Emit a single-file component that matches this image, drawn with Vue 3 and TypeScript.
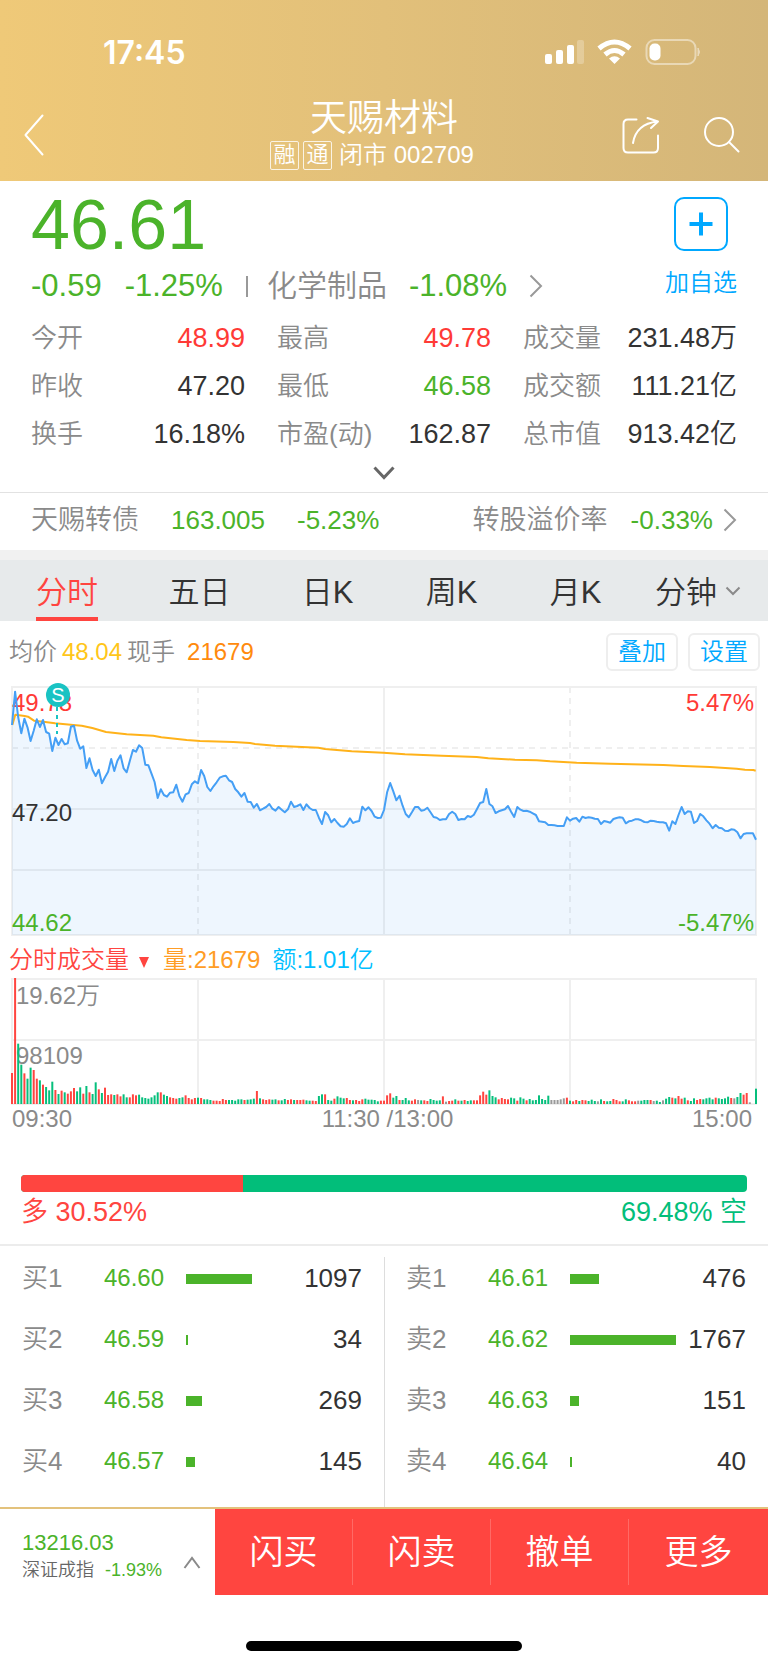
<script setup lang="ts">
import { ref } from 'vue'

type Tone = 'up' | 'down' | 'flat'

interface Stat {
  label: string
  value: string
  tone: Tone
}

const stats: Stat[] = [
  { label: '今开', value: '48.99', tone: 'up' },
  { label: '最高', value: '49.78', tone: 'up' },
  { label: '成交量', value: '231.48万', tone: 'flat' },
  { label: '昨收', value: '47.20', tone: 'flat' },
  { label: '最低', value: '46.58', tone: 'down' },
  { label: '成交额', value: '111.21亿', tone: 'flat' },
  { label: '换手', value: '16.18%', tone: 'flat' },
  { label: '市盈(动)', value: '162.87', tone: 'flat' },
  { label: '总市值', value: '913.42亿', tone: 'flat' },
]

const tabs = ['分时', '五日', '日K', '周K', '月K', '分钟']
const activeTab = ref(0)

interface Level {
  name: string
  price: string
  volume: number
}

const books: { id: string; caption: string; levels: Level[] }[] = [
  {
    id: 'bids',
    caption: '买盘',
    levels: [
      { name: '买1', price: '46.60', volume: 1097 },
      { name: '买2', price: '46.59', volume: 34 },
      { name: '买3', price: '46.58', volume: 269 },
      { name: '买4', price: '46.57', volume: 145 },
    ],
  },
  {
    id: 'asks',
    caption: '卖盘',
    levels: [
      { name: '卖1', price: '46.61', volume: 476 },
      { name: '卖2', price: '46.62', volume: 1767 },
      { name: '卖3', price: '46.63', volume: 151 },
      { name: '卖4', price: '46.64', volume: 40 },
    ],
  },
]
const maxLevel = Math.max(...books.flatMap((b) => b.levels.map((l) => l.volume)))
const levelWidth = (v: number) => `${(v / maxLevel) * 100}%`

const longShare = 30.52
const actions = ['闪买', '闪卖', '撤单', '更多']

// One sample per trading minute, 240 intervals across the plot.
const LEFT = 12
const STEP = 744 / 240
const minuteX = (i: number) => LEFT + i * STEP

// Depth of each sample below the chart origin, three units to a pixel.
const price = [
  165, 65, 142, 190, 146, 172, 213, 182, 148, 171, 150, 186, 191, 243, 203, 225, 207, 223, 220, 170,
  167, 212, 236, 229, 294, 265, 300, 318, 299, 340, 322, 305, 267, 303, 272, 256, 295, 307, 273, 240,
  245, 226, 234, 284, 286, 311, 336, 384, 358, 375, 380, 368, 367, 344, 378, 395, 373, 369, 343, 334,
  340, 300, 318, 351, 363, 349, 337, 323, 319, 317, 331, 336, 357, 367, 380, 369, 395, 396, 413, 402,
  421, 416, 411, 402, 416, 422, 411, 419, 427, 418, 395, 411, 408, 403, 420, 403, 414, 420, 420, 443,
  462, 426, 436, 457, 447, 459, 469, 470, 462, 445, 459, 455, 453, 410, 421, 412, 423, 440, 444, 443,
  420, 367, 339, 364, 391, 377, 407, 432, 442, 427, 411, 411, 422, 420, 413, 427, 441, 443, 450, 448,
  448, 432, 425, 432, 450, 447, 448, 438, 441, 434, 417, 399, 396, 357, 402, 409, 429, 424, 421, 418,
  408, 425, 441, 411, 419, 423, 422, 425, 430, 435, 454, 455, 457, 465, 465, 466, 468, 468, 468, 442,
  452, 446, 444, 455, 440, 444, 442, 443, 446, 447, 462, 453, 455, 458, 447, 444, 442, 443, 460, 454,
  452, 448, 448, 451, 456, 457, 452, 453, 455, 457, 457, 460, 482, 454, 462, 435, 411, 432, 424, 425,
  459, 453, 432, 439, 451, 461, 475, 465, 473, 475, 482, 483, 478, 479, 487, 505, 492, 490, 490, 490,
  509,
]
const toY = (v: number) => v / 3 - 10
const pricePoints = price.map((v, i) => `${minuteX(i).toFixed(1)},${toY(v).toFixed(1)}`).join(' ')
const areaPoints = `12,255 ${pricePoints} 756,255`

const average: [number, number][] = [
  [37, 165], [46, 134], [74, 138], [84, 140], [102, 152], [130, 155], [165, 160], [220, 165], [245, 167],
  [277, 174], [318, 186], [380, 193], [460, 197], [484, 202], [560, 210], [600, 213], [700, 216],
  [750, 219], [765, 222], [825, 227], [955, 233], [975, 237], [1055, 244], [1150, 248], [1215, 253],
  [1325, 257], [1430, 261], [1465, 265], [1545, 269], [1610, 271], [1650, 274], [1730, 278],
  [1830, 281], [1990, 285], [2050, 288], [2130, 291], [2210, 296], [2235, 299], [2260, 300], [2267, 302],
]
const averagePoints = average.map(([x, y]) => `${(x / 3).toFixed(1)},${toY(y).toFixed(1)}`).join(' ')

// Minute volumes: height in thirds of a pixel plus direction (r up, g down, n unchanged).
const volumeData =
  '93r 378r 181g 118g 92r 76g 109g 102r 76r 71g 58r 51g 41g 67g 42r 30g 40r 35g 31r 38r ' +
  '48r 38g 50g 31r 54g 35r 30g 65g 44r 33g 49r 27r 29r 27g 29r 23r 29g 20g 20r 29r ' +
  '26r 28g 20g 18g 16g 20g 26g 35g 35r 28g 24g 20r 18r 16r 18g 20g 26r 18r 14r 18r ' +
  '19g 18r 14g 14g 12g 10r 10r 9r 15r 12r 12g 12g 10g 14g 14g 12r 13g 14g 16g 39r ' +
  '17g 14r 12r 14r 13g 14g 11r 11g 15g 12r 14r 12g 12r 12r 13r 11g 10g 10r 9r 24g ' +
  '29g 29r 12g 10g 16r 23g 19g 17g 18r 12r 11g 12r 9r 14r 16g 13g 13g 12g 8g 10r ' +
  '10r 26r 32r 19g 24g 12r 12g 18g 11g 10r 14r 12n 11g 11r 9r 15g 12g 10g 11g 23r ' +
  '7n 9r 10r 14g 10r 10g 12r 9g 11g 11r 11r 26r 37r 28r 41g 24g 20g 14r 18r 15r ' +
  '14r 19g 17g 10r 20g 16g 11r 15g 11g 12g 26g 15g 12g 25g 12n 12n 12n 14n 17n 19r ' +
  '10g 8r 12r 9g 12r 11r 9g 13g 9g 8n 14g 9r 8g 9g 15r 12r 8r 8g 14g 11r ' +
  '8r 8r 10n 10g 12g 12g 12r 9n 10g 6g 11n 16g 21g 19r 17g 24r 16r 19g 11r 9g ' +
  '17g 12r 15r 14g 17g 19g 14g 19r 17g 15g 17g 22g 18r 17n 21g 33g 28r 33r 5n 0n ' +
  '46g'
const barColors: Record<string, string> = { r: '#ff4540', g: '#06bf7c', n: '#999999' }
const volumeBars = volumeData.split(' ').map((entry, i) => {
  const height = parseInt(entry, 10) / 3
  return { x: minuteX(i) - 1, y: 126 - height, height, color: barColors[entry.slice(-1)] }
})
</script>

<template>
  <main class="app">
    <header class="top">
      <div class="status">
        <span class="clock">17:45</span>
        <svg class="status-icons" width="160" height="30" viewBox="0 0 160 30" aria-hidden="true">
          <g fill="#fff">
            <rect x="3" y="17" width="7" height="10" rx="2" />
            <rect x="14" y="13" width="7" height="14" rx="2" />
            <rect x="25" y="8" width="7" height="19" rx="2" />
            <rect x="35" y="3" width="7" height="24" rx="2" opacity=".25" />
            <path d="M72.500 27 L67 21.500 Q72.500 17 78 21.500 Z" />
          </g>
          <g fill="none" stroke="#fff" stroke-width="5">
            <path d="M63 17.500 Q72.500 9.500 82 17.500" />
            <path d="M57 11.500 Q72.500 -1.500 88 11.500" />
          </g>
          <rect x="104.500" y="3" width="49" height="24" rx="8" fill="none" stroke="#fff" stroke-opacity=".45" stroke-width="2" />
          <rect x="107.500" y="6.500" width="11" height="17" rx="5" fill="#fff" />
          <path d="M156 11 q3 4 0 8 z" fill="#fff" stroke="#fff" opacity=".5" />
        </svg>
      </div>
      <nav class="nav">
        <button class="icon-btn back" type="button" aria-label="返回">
          <svg width="20" height="42" viewBox="0 0 20 42"><path d="M18.500 1.500 L1.500 21 L18.500 40.500" /></svg>
        </button>
        <div class="heading">
          <h1>天赐材料</h1>
          <p class="sub"><span class="tag">融</span><span class="tag">通</span><span>闭市 002709</span></p>
        </div>
        <div class="nav-right">
          <button class="icon-btn" type="button" aria-label="分享">
            <svg width="38" height="40" viewBox="0 0 38 40">
              <path d="M14.500 4.500 H6 Q1.500 4.500 1.500 9 V33 Q1.500 37.500 6 37.500 H31.500 Q36 37.500 36 33 V20.500" />
              <path d="M11 28 Q14 9 35.500 6.500 M25.500 3 L36 6.500 L29 13" />
            </svg>
          </button>
          <button class="icon-btn" type="button" aria-label="搜索">
            <svg width="38" height="40" viewBox="0 0 38 40">
              <circle cx="17" cy="17" r="14" /><path d="M27 27 L36.500 36.500" />
            </svg>
          </button>
        </div>
      </nav>
    </header>

    <section class="quote">
      <div class="quote-main">
        <div>
          <p class="price">46.61</p>
          <p class="change">
            <span class="down">-0.59</span>
            <span class="down pct">-1.25%</span>
            <i class="bar-sep"></i>
            <a class="sector" href="#sector">化学制品<span class="down">-1.08%</span>
              <svg class="chev" width="14" height="24" viewBox="0 0 14 24"><path d="M1.500 1.500 L12 12 L1.500 22.500" /></svg>
            </a>
          </p>
        </div>
        <button class="add" type="button">
          <svg width="54" height="54" viewBox="0 0 54 54" aria-hidden="true">
            <rect x="1" y="1" width="52" height="52" rx="9" fill="none" stroke="#00a8ff" stroke-width="2" />
            <path d="M27 15.500 V38.500 M15.500 27 H38.500" stroke="#00a8ff" stroke-width="4" />
          </svg>
          加自选
        </button>
      </div>
      <dl class="stats">
        <div v-for="s in stats" :key="s.label">
          <dt>{{ s.label }}</dt>
          <dd :class="s.tone">{{ s.value }}</dd>
        </div>
      </dl>
      <button class="expand" type="button" aria-label="展开">
        <svg width="22" height="14" viewBox="0 0 22 14"><path d="M1.500 1.500 L11 11.500 L20.500 1.500" /></svg>
      </button>
    </section>

    <a class="bond" href="#bond">
      <span class="bond-name">天赐转债</span>
      <span class="down bond-price">163.005</span>
      <span class="down">-5.23%</span>
      <span class="premium">转股溢价率</span>
      <span class="down">-0.33%</span>
      <svg class="chev" width="14" height="24" viewBox="0 0 14 24"><path d="M1.500 1.500 L12 12 L1.500 22.500" /></svg>
    </a>

    <div class="tabs" role="tablist">
      <button
        v-for="(t, i) in tabs"
        :key="t"
        type="button"
        role="tab"
        :aria-selected="i === activeTab"
        :class="{ active: i === activeTab }"
        @click="activeTab = i"
      >
        <span>{{ t }}</span>
        <svg v-if="i === 5" width="16" height="10" viewBox="0 0 16 10"><path d="M1.500 1.500 L8 8 L14.500 1.500" /></svg>
      </button>
    </div>

    <section>
      <div class="legend">
        <span class="muted">均价</span><span class="avg">48.04</span>
        <span class="muted">现手</span><span class="lots">21679</span>
        <span class="tools">
          <button type="button">叠加</button>
          <button type="button">设置</button>
        </span>
      </div>

      <svg class="plot" viewBox="0 0 768 260" role="img" aria-label="分时走势">
        <g class="grid">
          <path d="M12 7 H756 V255 H12 Z M12 129 H756 M12 190 H756 M384 7 V255" />
          <path d="M12 68 H756 M198 7 V255 M570 7 V255" stroke-dasharray="6 5" />
        </g>
        <polygon :points="areaPoints" fill="#3d96f5" fill-opacity=".09" />
        <g class="axis">
          <text x="12" y="31" fill="#ff3a36">49.78</text>
          <text x="12" y="141" fill="#333">47.20</text>
          <text x="12" y="251" fill="#4bb32a">44.62</text>
          <text x="754" y="31" fill="#ff3a36" text-anchor="end">5.47%</text>
          <text x="754" y="251" fill="#4bb32a" text-anchor="end">-5.47%</text>
        </g>
        <polyline :points="averagePoints" fill="none" stroke="#ffb21a" stroke-width="2" stroke-linejoin="round" />
        <polyline :points="pricePoints" fill="none" stroke="#459ff5" stroke-width="2" stroke-linejoin="round" />
        <path d="M57 27 V54" stroke="#19c3c3" stroke-width="2" stroke-dasharray="4 4" />
        <circle cx="58" cy="15" r="12" fill="#19c3c3" />
        <text class="mark" x="58" y="22" text-anchor="middle">S</text>
      </svg>

      <div class="legend vol-legend">
        <button class="indicator" type="button">
          分时成交量
          <svg width="10" height="11" viewBox="0 0 10 11"><path d="M0 0 H10 L5 11 Z" fill="#ff4540" /></svg>
        </button>
        <span class="vol">量:21679</span>
        <span class="amt">额:1.01亿</span>
      </div>

      <svg class="plot" viewBox="0 0 768 128" role="img" aria-label="分时成交量">
        <path class="grid" d="M12 1 H756 V126 H12 Z M12 62 H756 M198 1 V126 M384 1 V126 M570 1 V126" />
        <g class="axis" fill="#8a8a8a">
          <text x="16" y="26">19.62万</text>
          <text x="16" y="86">98109</text>
        </g>
        <rect v-for="(b, i) in volumeBars" :key="i" :x="b.x" :y="b.y" width="2" :height="b.height" :fill="b.color" />
      </svg>

      <div class="times"><span>09:30</span><span>11:30 /13:00</span><span>15:00</span></div>
    </section>

    <section class="sentiment">
      <div class="meter"><div class="long" :style="{ width: longShare + '%' }"></div></div>
      <p><span>多 30.52%</span><span class="short">69.48% 空</span></p>
    </section>

    <section class="books">
      <div v-for="b in books" :key="b.id" class="book">
        <table :aria-label="b.caption">
          <colgroup><col class="c-name" /><col class="c-price" /><col class="c-bar" /><col /></colgroup>
          <tbody>
            <tr v-for="l in b.levels" :key="l.name">
              <th scope="row">{{ l.name }}</th>
              <td class="down lvl-price">{{ l.price }}</td>
              <td><div class="lvl-bar" :style="{ width: levelWidth(l.volume) }"></div></td>
              <td class="lvl-vol">{{ l.volume }}</td>
            </tr>
          </tbody>
        </table>
      </div>
    </section>

    <footer class="dock">
      <button class="index" type="button">
        <span class="index-text">
          <span class="index-value">13216.03</span>
          <span class="index-name">深证成指<span class="down">-1.93%</span></span>
        </span>
        <svg width="18" height="13" viewBox="0 0 18 13"><path d="M1.500 12 L9 2 L16.500 12" /></svg>
      </button>
      <button v-for="a in actions" :key="a" class="trade" type="button"><span>{{ a }}</span></button>
    </footer>
    <div class="home"><span></span></div>
  </main>
</template>

<style>
body {
  margin: 0;
  background: #fff;
}
</style>

<style scoped>
.app {
  font-family: 'Liberation Sans', 'Noto Sans CJK SC', sans-serif;
  font-weight: 350;
  font-size: 26px;
  line-height: 32px;
  color: #333;
  background: #fff;
}
p,
h1,
dl,
dd {
  margin: 0;
}
button {
  font: inherit;
  color: inherit;
  background: none;
  border: 0;
  padding: 0;
  cursor: pointer;
}
a {
  color: inherit;
  text-decoration: none;
}
svg {
  display: block;
  flex: none;
}
.up {
  color: #ff3a36;
}
.down {
  color: #4bb32a;
}
.muted {
  color: #8a8a8a;
}

/* header */
.top {
  color: #fff;
  background: linear-gradient(90deg, #efc978, #e2c07a 50%, #d4b679);
  padding: 32px 28px 10px;
}
.status {
  display: flex;
  justify-content: space-between;
  align-items: center;
  height: 40px;
  padding: 0 38px 0 75px;
}
.clock {
  font: 600 32px Inter, sans-serif;
}
.nav {
  display: grid;
  grid-template-columns: 1fr auto 1fr;
  align-items: center;
  padding-top: 27px;
}
.icon-btn svg {
  fill: none;
  stroke: #fff;
  stroke-width: 2;
  stroke-linecap: round;
  stroke-linejoin: round;
}
.back {
  justify-self: start;
  margin-left: -4px;
}
.nav-right {
  display: flex;
  justify-content: flex-end;
  gap: 42px;
}
h1 {
  font-size: 37px;
  line-height: 40px;
  font-weight: 350;
  text-align: center;
}
.sub {
  display: flex;
  align-items: center;
  gap: 4px;
  font-size: 24px;
  line-height: 32px;
  padding-right: 24px;
}
.tag {
  width: 27px;
  height: 27px;
  line-height: 26px;
  text-align: center;
  border: 1px solid rgba(255, 255, 255, 0.8);
  border-radius: 2px;
  font-size: 22px;
}
.sub span:last-child {
  margin-left: 3px;
}

/* quote */
.quote {
  padding: 16px 31px 0;
}
.quote-main {
  display: flex;
  justify-content: space-between;
}
.price {
  font-size: 70px;
  line-height: 56px;
  color: #4bb32a;
}
.change {
  display: flex;
  align-items: center;
  margin-top: 13px;
  font-size: 31px;
  line-height: 40px;
}
.pct {
  margin-left: 23px;
}
.bar-sep {
  width: 2px;
  height: 21px;
  margin: 0 19px 0 23px;
  background: #999;
}
.sector {
  display: flex;
  align-items: center;
  font-size: 30px;
  color: #8a8a8a;
}
.sector .down {
  margin: 0 22px;
  font-size: 31px;
}
.chev {
  fill: none;
  stroke: #999;
  stroke-width: 2;
}
.add {
  display: flex;
  flex-direction: column;
  align-items: center;
  gap: 14px;
  color: #00a8ff;
  font-size: 24px;
  line-height: 36px;
}
.stats {
  display: grid;
  grid-template-columns: repeat(3, 1fr);
  column-gap: 32px;
  margin-top: 8px;
}
.stats div {
  display: flex;
  justify-content: space-between;
  line-height: 48px;
  white-space: nowrap;
}
.stats dt {
  color: #8a8a8a;
}
.stats dd {
  font-size: 27px;
}
.expand {
  display: flex;
  justify-content: center;
  width: 100%;
  height: 34px;
  padding-top: 8px;
}
.expand svg {
  fill: none;
  stroke: #666;
  stroke-width: 3;
}

/* bond */
.bond {
  display: flex;
  align-items: center;
  height: 53px;
  padding: 0 31px 4px;
  border-top: 1px solid #e2e2e2;
  border-bottom: 10px solid #f1f1f1;
}
.bond-name,
.premium {
  color: #8a8a8a;
  font-size: 27px;
}
.bond-price {
  margin: 0 32px;
}
.premium {
  margin: 0 23px 0 auto;
}
.bond .chev {
  margin-left: 10px;
}

/* tabs */
.tabs {
  display: grid;
  grid-template-columns: 134fr 131fr 125fr 123fr 125fr 130fr;
  height: 61px;
  background: #e7eaeb;
  font-size: 31px;
}
.tabs button {
  display: flex;
  align-items: stretch;
  justify-content: center;
}
.tabs span {
  padding-top: 8px;
  line-height: 49px;
  border-bottom: 4px solid transparent;
}
.tabs .active span {
  color: #ff4540;
  border-color: #ff4540;
}
.tabs svg {
  align-self: center;
  margin: 0 10px 0 8px;
  fill: none;
  stroke: #8a8a8a;
  stroke-width: 2;
}

/* charts */
.legend {
  display: flex;
  align-items: center;
  height: 57px;
  padding: 2px 8px 0 9px;
  font-size: 24px;
}
.avg {
  margin: 0 5px;
  color: #ffc619;
}
.lots {
  margin-left: 12px;
  color: #ff8a0d;
}
.tools {
  display: flex;
  gap: 10px;
  margin-left: auto;
}
.tools button {
  width: 72px;
  height: 38px;
  line-height: 34px;
  color: #00a8ff;
  border: 2px solid #eee;
  border-radius: 6px;
}
.plot {
  width: 100%;
  height: auto;
}
.grid {
  fill: none;
  stroke: #efefef;
  stroke-width: 2;
}
.axis {
  font-size: 24px;
}
.mark {
  font-size: 20px;
  fill: #fff;
}
.vol-legend {
  height: 36px;
  gap: 12px;
}
.indicator {
  display: flex;
  align-items: center;
  gap: 10px;
  margin-right: 2px;
  color: #ff4540;
}
.indicator svg {
  margin-top: 4px;
}
.vol {
  color: #ff9d26;
}
.amt {
  color: #00bfff;
}
.times {
  display: grid;
  grid-template-columns: 1fr auto 1fr;
  padding: 0 5px 0 12px;
  font-size: 24px;
  line-height: 26px;
  color: #8a8a8a;
}
.times span:last-child {
  text-align: right;
  padding-right: 11px;
}

/* long / short meter */
.sentiment {
  padding: 43px 21px 14px;
  border-bottom: 2px solid #ececec;
}
.meter {
  height: 17px;
  border-radius: 4px;
  overflow: hidden;
  background: #02be7a;
}
.long {
  height: 100%;
  background: #ff4540;
}
.sentiment p {
  display: flex;
  justify-content: space-between;
  margin-top: 2px;
  font-size: 27px;
  line-height: 36px;
  color: #ff4540;
}
.sentiment .short {
  color: #02be7a;
}

/* order book */
.books {
  display: grid;
  grid-template-columns: 1fr 1fr;
  padding-top: 11px;
}
.book {
  padding: 0 22px;
}
.book + .book {
  padding-left: 21px;
  border-left: 1px solid #ddd;
}
.book table {
  width: 100%;
  table-layout: fixed;
  border-collapse: collapse;
  margin: -10px 0 16px;
}
.c-name,
.c-price {
  width: 82px;
}
.c-bar {
  width: 106px;
}
.book th,
.book td {
  height: 61px;
  padding: 0;
}
.book th {
  font-size: 26px;
  font-weight: 350;
  text-align: left;
  color: #8a8a8a;
}
.book .lvl-price {
  font-size: 24px;
}
.lvl-bar {
  height: 10px;
  margin-top: 2px;
  background: #4bb32a;
}
.lvl-vol {
  text-align: right;
}

/* dock */
.dock {
  display: grid;
  grid-template-columns: 215fr 138fr 138fr 138fr 139fr;
  height: 86px;
  border-top: 2px solid #e3c27c;
}
.index {
  display: flex;
  align-items: center;
  justify-content: space-between;
  padding: 8px 14px 0 22px;
  text-align: left;
}
.index svg {
  margin-top: 12px;
  fill: none;
  stroke: #8a8a8a;
  stroke-width: 2;
}
.index-text {
  display: grid;
}
.index-value {
  font-size: 22px;
  line-height: 28px;
  color: #4bb32a;
}
.index-name {
  font-size: 18px;
  line-height: 26px;
  color: #666;
}
.index-name .down {
  margin-left: 11px;
}
.trade {
  display: flex;
  align-items: center;
  background: #ff4540;
  color: #fff;
  font-size: 34px;
}
.trade span {
  flex: 1;
  line-height: 66px;
  border-right: 1px solid rgba(255, 255, 255, 0.2);
}
.trade:last-child span {
  border: 0;
}
.home {
  display: flex;
  justify-content: center;
  padding: 46px 0 14px;
}
.home span {
  width: 36%;
  height: 10px;
  border-radius: 5px;
  background: #000;
}
</style>
